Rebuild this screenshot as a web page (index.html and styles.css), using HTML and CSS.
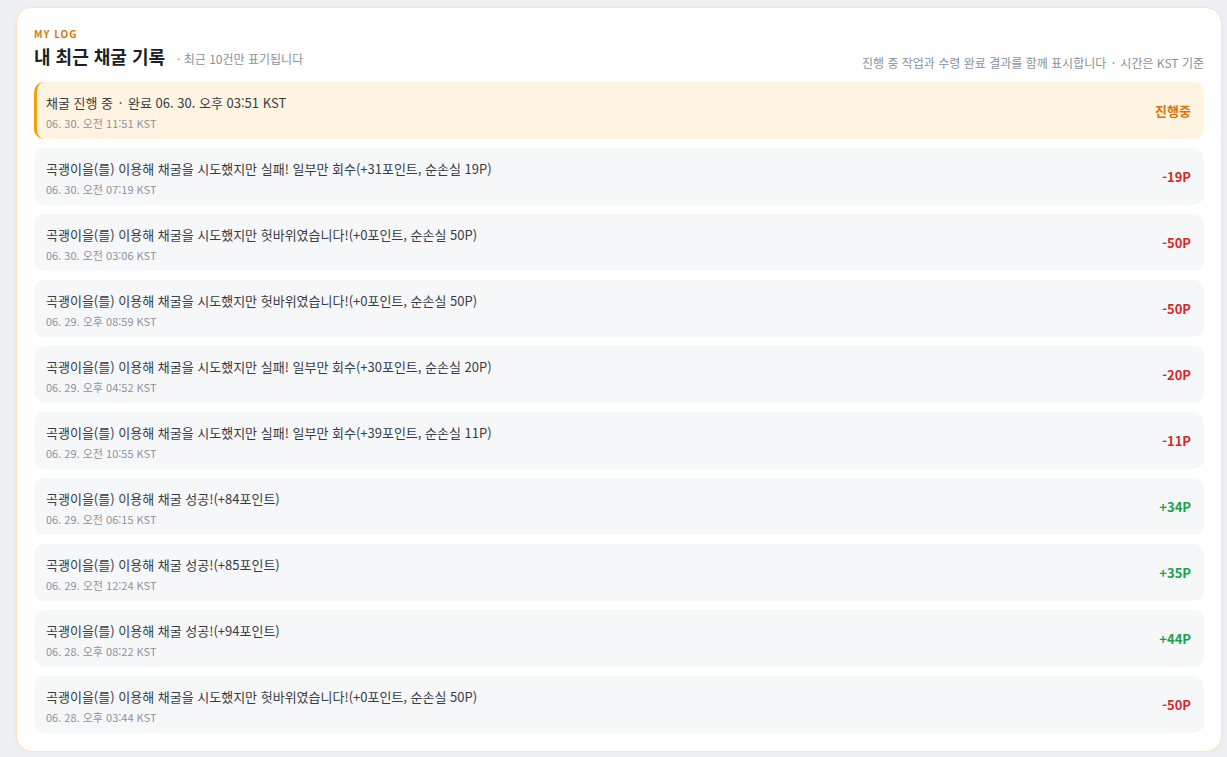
FILE: index.html
```html
<!DOCTYPE html>
<html lang="ko">
<head>
    <meta charset="UTF-8">
    <meta name="viewport" content="width=device-width, initial-scale=1.0">
    <title>내 최근 채굴 기록</title>
    <link rel="stylesheet" href="styles.css">
</head>
<body>
    <div class="log-card">
        <div class="eyebrow">MY LOG</div>
        <div class="log-head">
            <div class="head-left">
                <h2>내 최근 채굴 기록</h2>
                <span class="head-sub"><span class="dot">·</span> 최근 10건만 표기됩니다</span>
            </div>
            <div class="head-note">진행 중 작업과 수령 완료 결과를 함께 표시합니다 <span class="dot">·</span> 시간은 KST 기준</div>
        </div>

        <ul class="log-list" id="logList"></ul>
    </div>

    <script>
        var logs = [
            { text: '채굴 진행 중 · 완료 06. 30. 오후 03:51 KST', time: '06. 30. 오전 11:51 KST', value: '진행중', type: 'pending' },
            { text: '곡괭이을(를) 이용해 채굴을 시도했지만 실패! 일부만 회수(+31포인트, 순손실 19P)', time: '06. 30. 오전 07:19 KST', value: '-19P', type: 'loss' },
            { text: '곡괭이을(를) 이용해 채굴을 시도했지만 헛바위였습니다!(+0포인트, 순손실 50P)', time: '06. 30. 오전 03:06 KST', value: '-50P', type: 'loss' },
            { text: '곡괭이을(를) 이용해 채굴을 시도했지만 헛바위였습니다!(+0포인트, 순손실 50P)', time: '06. 29. 오후 08:59 KST', value: '-50P', type: 'loss' },
            { text: '곡괭이을(를) 이용해 채굴을 시도했지만 실패! 일부만 회수(+30포인트, 순손실 20P)', time: '06. 29. 오후 04:52 KST', value: '-20P', type: 'loss' },
            { text: '곡괭이을(를) 이용해 채굴을 시도했지만 실패! 일부만 회수(+39포인트, 순손실 11P)', time: '06. 29. 오전 10:55 KST', value: '-11P', type: 'loss' },
            { text: '곡괭이을(를) 이용해 채굴 성공!(+84포인트)', time: '06. 29. 오전 06:15 KST', value: '+34P', type: 'gain' },
            { text: '곡괭이을(를) 이용해 채굴 성공!(+85포인트)', time: '06. 29. 오전 12:24 KST', value: '+35P', type: 'gain' },
            { text: '곡괭이을(를) 이용해 채굴 성공!(+94포인트)', time: '06. 28. 오후 08:22 KST', value: '+44P', type: 'gain' },
            { text: '곡괭이을(를) 이용해 채굴을 시도했지만 헛바위였습니다!(+0포인트, 순손실 50P)', time: '06. 28. 오후 03:44 KST', value: '-50P', type: 'loss' }
        ];

        var rows = '';
        logs.forEach((v) => {
            // middle dot gets a little breathing room
            var text = v.text.replace(' · ', ' <span class="dot">·</span> ');
            rows += `
                <li class="log-row ${ v.type }">
                    <div class="log-info">
                        <div class="log-text">${ text }</div>
                        <div class="log-time">${ v.time }</div>
                    </div>
                    <div class="log-value">${ v.value }</div>
                </li>
            `;
        });
        document.getElementById('logList').innerHTML = rows;
    </script>
</body>
</html>
```

FILE: styles.css
```css
body {
    font-family: "Noto Sans CJK KR", "Noto Sans", sans-serif;
    background-color: #eef0f3;
    margin: 0;
    padding: 7px 5px 0 16px;
    color: #2f3540;
}
.log-card {
    background-color: #fff;
    border: 1px solid #fde4bd;
    border-radius: 16px;
    padding: 19px 17px 18px 17px;
    box-shadow: 0 2px 6px rgba(0, 0, 0, 0.04);
}
.eyebrow {
    font-size: 10px;
    font-weight: 700;
    letter-spacing: 1px;
    color: #d97706;
    line-height: 14px;
}
.log-head {
    display: flex;
    justify-content: space-between;
    align-items: flex-end;
    margin-top: 2px;
    margin-bottom: 13px;
}
.head-left {
    display: flex;
    align-items: baseline;
    gap: 12px;
}
h2 {
    margin: 0;
    font-size: 18px;
    font-weight: 700;
    color: #1b1f27;
    line-height: 26px;
}
.head-sub {
    font-size: 12px;
    color: #8a919c;
}
.head-note {
    font-size: 12px;
    color: #8a919c;
    line-height: 18px;
    margin-bottom: -3px;
}
.dot {
    margin: 0 2px;
}
.head-sub .dot {
    margin: 0;
}
.log-list {
    list-style: none;
    margin: 0;
    padding: 0;
    display: flex;
    flex-direction: column;
    gap: 9px;
}
.log-row {
    display: flex;
    justify-content: space-between;
    align-items: center;
    height: 57px;
    box-sizing: border-box;
    padding: 0 13px 0 12px;
    background-color: #f6f7f9;
    border-radius: 10px;
}
.log-row.pending {
    background-color: #fff3e2;
    border-left: 3px solid #f59e0b;
    padding-left: 9px;
}
.log-info {
    padding-top: 3px;
}
.log-text {
    font-size: 13px;
    line-height: 18px;
    color: #363b45;
}
.log-time {
    font-size: 11px;
    line-height: 15px;
    margin-top: 4px;
    color: #8d939c;
}
.log-value {
    font-size: 13px;
    font-weight: 700;
}
.log-row.loss .log-value {
    color: #dc2626;
}
.log-row.gain .log-value {
    color: #16a34a;
}
.log-row.pending .log-value {
    color: #d97706;
}
```
